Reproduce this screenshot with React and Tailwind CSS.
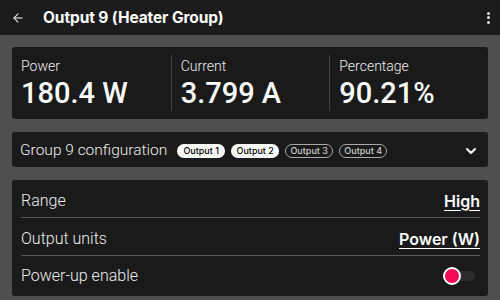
import React from "react";
import { ArrowLeft, ChevronDown } from "lucide-react";

const stats = [
  { label: "Power", value: "180.4 W" },
  { label: "Current", value: "3.799 A" },
  { label: "Percentage", value: "90.21%" },
];

const outputs = [
  { name: "Output 1", on: true },
  { name: "Output 2", on: true },
  { name: "Output 3", on: false },
  { name: "Output 4", on: false },
];

export default function App() {
  return (
    <div className="w-[500px] h-[300px] bg-[#4f4f4f] overflow-hidden text-white font-['Roboto',sans-serif]">
      <div className="h-[35px] bg-[#1b1b1b] flex items-center pl-[11px] pr-[10px]">
        <ArrowLeft size={14} strokeWidth={1.75} className="text-white" />
        <div className="ml-[18px] text-[15.5px] font-bold font-['Inter',sans-serif] tracking-[-0.1px]">
          Output 9 (Heater Group)
        </div>
        <div className="ml-auto flex flex-col gap-[1.5px] items-center">
          <span className="w-[3px] h-[3px] rounded-full bg-[#ddd]" />
          <span className="w-[3px] h-[3px] rounded-full bg-[#ddd]" />
          <span className="w-[3px] h-[3px] rounded-full bg-[#ddd]" />
        </div>
      </div>

      <div className="px-[12px] pt-[12px] flex flex-col gap-[13px]">
        <div className="h-[72px] bg-[#1a1a1a] rounded-[3px] grid grid-cols-3 py-[8px]">
          {stats.map((s, i) => (
            <div key={s.label} className={"px-[9px] " + (i > 0 ? "border-l border-[#444]" : "")}>
              <div className="text-[14px] font-light leading-[16px] mt-[3px] text-[#eee]">{s.label}</div>
              <div className="text-[29px] font-medium leading-[32px] mt-[3px]">{s.value}</div>
            </div>
          ))}
        </div>

        <div className="h-[35px] bg-[#1a1a1a] rounded-[3px] flex items-center pl-[8px] pr-[9px] pt-[2px]">
          <span className="text-[15.5px] font-light text-[#eee]">Group 9 configuration</span>
          <div className="ml-[10px] flex gap-[6px]">
            {outputs.map((o) => (
              <span
                key={o.name}
                className={
                  "h-[14px] w-[48px] justify-center rounded-full text-[9px] font-medium font-['Inter',sans-serif] flex items-center " +
                  (o.on ? "bg-white text-black" : "border border-[#aaa] text-[#ccc]")
                }
              >
                {o.name}
              </span>
            ))}
          </div>
          <ChevronDown size={16} strokeWidth={3} className="ml-auto text-white" />
        </div>

        <div className="bg-[#1a1a1a] rounded-[3px] px-[9px] pr-[8px]">
          <div className="h-[38px] pt-[4px] flex items-center justify-between border-b border-[#5a5a5a]">
            <span className="text-[16px] font-light text-[#eee]">Range</span>
            <span className="text-[16px] font-semibold font-['Inter',sans-serif] underline underline-offset-[3px]">High</span>
          </div>
          <div className="h-[38px] pt-[4px] flex items-center justify-between border-b border-[#5a5a5a]">
            <span className="text-[16px] font-light text-[#eee]">Output units</span>
            <span className="text-[16px] font-semibold font-['Inter',sans-serif] underline underline-offset-[3px]">Power (W)</span>
          </div>
          <div className="h-[40px] flex items-center justify-between">
            <span className="text-[16px] font-light text-[#eee]">Power-up enable</span>
            <div className="relative w-[32px] h-[18px] flex items-center mr-[5px]">
              <span className="absolute right-0 w-[26px] h-[10px] rounded-full bg-[#2c2c2c]" />
              <span className="absolute left-0 w-[18px] h-[18px] rounded-full bg-[#f50a55] border-[2.5px] border-white" />
            </div>
          </div>
        </div>
      </div>
    </div>
  );
}
